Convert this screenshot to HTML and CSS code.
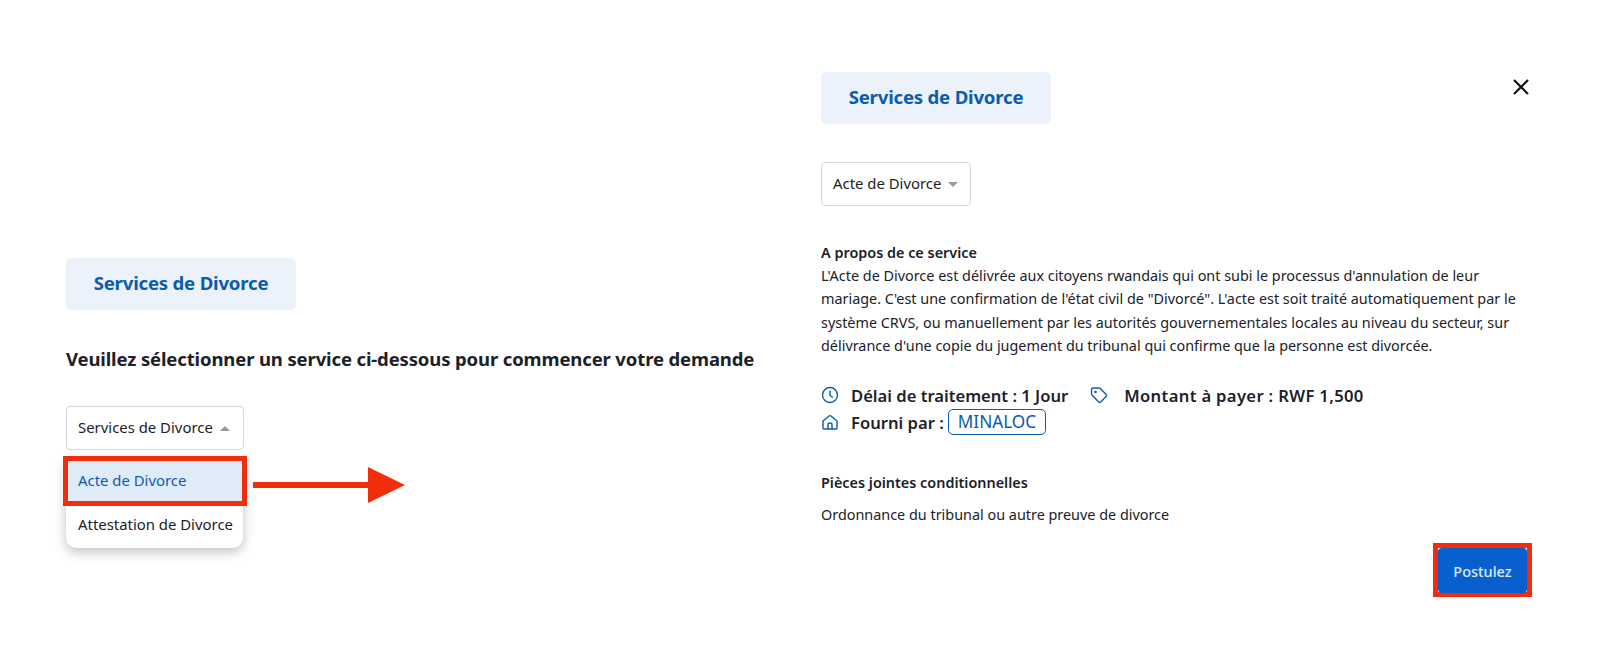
FILE: index.html
```html
<!DOCTYPE html>
<html lang="fr">
<head>
    <meta charset="UTF-8">
    <meta name="viewport" content="width=device-width, initial-scale=1.0">
    <title>Services de Divorce</title>
    <link rel="stylesheet" href="styles.css">
</head>
<body>
    <div class="left">
        <div class="pill">Services de Divorce</div>
        <h3 class="prompt">Veuillez sélectionner un service ci-dessous pour commencer votre demande</h3>
        <div class="select-wrap">
            <div class="select">Services de Divorce <span class="caret up"></span></div>
            <div class="menu">
                <div class="option active">Acte de Divorce</div>
                <div class="option">Attestation de Divorce</div>
            </div>
            <svg class="arrow" width="152" height="36" viewBox="0 0 152 36">
                <rect x="0" y="15" width="116" height="6" fill="#f12e0c"/>
                <polygon points="115,0 152,18 115,36" fill="#f12e0c"/>
            </svg>
        </div>
    </div>
    <div class="right">
        <button class="close" aria-label="Fermer">
            <svg width="20" height="20" viewBox="0 0 20 20"><path d="M3 3 L17 17 M17 3 L3 17" stroke="#111" stroke-width="2.2" fill="none"/></svg>
        </button>
        <div class="pill">Services de Divorce</div>
        <div class="select small">Acte de Divorce <span class="caret"></span></div>
        <div class="about">
            <strong>A propos de ce service</strong>
            <p>L'Acte de Divorce est délivrée aux citoyens rwandais qui ont subi le processus d'annulation de leur mariage. C'est une confirmation de l'état civil de "Divorcé". L'acte est soit traité automatiquement par le système CRVS, ou manuellement par les autorités gouvernementales locales au niveau du secteur, sur délivrance d'une copie du jugement du tribunal qui confirme que la personne est divorcée.</p>
        </div>
        <div class="meta">
            <div class="meta-row">
                <svg class="icon" viewBox="0 0 18 18"><circle cx="9" cy="9" r="7.5"/><path d="M9 4.5 V9.5 L12 11.5"/></svg>
                <span>Délai de traitement : 1 Jour</span>
                <svg class="icon tag" viewBox="0 0 18 18"><path d="M1.5 3.5 Q1.5 2 3 2 H9 Q9.8 2 10.3 2.5 L16.2 8.6 Q17 9.5 16.2 10.4 L10.6 16 Q9.6 16.8 8.7 16 L2.2 9.2 Q1.5 8.6 1.5 7.8 Z"/><circle cx="5.5" cy="6" r="0.6"/></svg>
                <span class="amount">Montant à payer : RWF 1,500</span>
            </div>
            <div class="meta-row">
                <svg class="icon" viewBox="0 0 18 18"><path d="M2 8 L8 3 Q9 2.2 10 3 L16 8 V15 Q16 16 15 16 H3 Q2 16 2 15 Z"/><path d="M7 16 V11.5 Q7 10 9 10 Q11 10 11 11.5 V16"/></svg>
                <span>Fourni par :</span>
                <span class="badge">MINALOC</span>
            </div>
        </div>
        <strong class="attach-title">Pièces jointes conditionnelles</strong>
        <p class="attach">Ordonnance du tribunal ou autre preuve de divorce</p>
        <div class="actions">
            <div class="apply-frame">
                <button class="apply">Postulez</button>
            </div>
        </div>
    </div>
</body>
</html>
```

FILE: styles.css
```css
* {
    box-sizing: border-box;
}
body {
    margin: 0;
    height: 661px;
    overflow: hidden;
    display: flex;
    background: white;
    color: #1c2128;
    font-family: "Noto Sans", Arial, sans-serif;
    font-size: 14.4px;
}
.left {
    width: 821px;
    padding: 258px 0 0 66px;
}
.right {
    position: relative;
    width: 779px;
    padding: 72px 68px 0 0;
}
.pill {
    width: 230px;
    height: 52px;
    display: flex;
    align-items: center;
    justify-content: center;
    padding-bottom: 4px;
    background: #ebf2fb;
    border-radius: 5px;
    color: #0b5cad;
    font-size: 18.6px;
    font-weight: 700;
    letter-spacing: -0.2px;
}
.prompt {
    margin: 36px 0 0;
    font-size: 18.5px;
    line-height: 26px;
    font-weight: 700;
    white-space: nowrap;
    letter-spacing: -0.13px;
}
.select-wrap {
    position: relative;
    width: 178px;
    margin-top: 34px;
}
.select {
    height: 44px;
    width: 178px;
    display: flex;
    align-items: center;
    gap: 7px;
    padding: 0 11px 2px;
    border: 1px solid #d3d5d8;
    border-radius: 4px;
    font-size: 14.9px;
    white-space: nowrap;
}
.select.small {
    width: 150px;
    margin-top: 38px;
}
.caret {
    width: 0;
    height: 0;
    border-left: 5px solid transparent;
    border-right: 5px solid transparent;
    border-top: 5px solid #999;
    margin-top: 2px;
}
.caret.up {
    border-top: none;
    border-bottom: 5px solid #999;
}
.menu {
    margin-top: 9px;
    width: 177px;
    height: 89px;
    background: white;
    border-radius: 0 0 10px 10px;
    box-shadow: 0 4px 12px rgba(0, 0, 0, 0.25);
}
.option {
    height: 44px;
    display: flex;
    align-items: center;
    padding: 0 12px 2px;
    font-size: 14.9px;
    white-space: nowrap;
}
.option.active {
    width: 178px;
    color: #0b5cad;
    background: #e0ebf8;
    outline: 5px solid #f12e0c;
    outline-offset: -2px;
}
.arrow {
    position: absolute;
    left: 187px;
    top: 61px;
}
.close {
    position: absolute;
    top: 77px;
    left: 690px;
    padding: 0;
    border: none;
    background: none;
}
.about {
    margin-top: 35px;
    line-height: 23.2px;
}
.about strong {
    font-weight: 600;
}
.about p {
    margin: 0;
}
.meta {
    display: flex;
    flex-direction: column;
    gap: 1px;
    margin-top: 25px;
    font-size: 16.6px;
    font-weight: 600;
}
.meta-row {
    display: flex;
    align-items: center;
    height: 26px;
}
.icon {
    width: 18px;
    height: 18px;
    margin-right: 12px;
    fill: none;
    stroke: #0b5cad;
    stroke-width: 1.4;
}
.icon.tag {
    margin-left: 22px;
    margin-right: 16px;
}
.amount {
    letter-spacing: 0.35px;
}
.badge {
    margin-left: 4px;
    padding: 0 9px;
    height: 26px;
    line-height: 24px;
    border: 1px solid #0b5cad;
    border-radius: 5px;
    color: #0b5cad;
    font-size: 17.2px;
    font-weight: 400;
}
.attach-title {
    display: block;
    margin-top: 38px;
    font-weight: 600;
}
.attach {
    margin: 13px 0 0;
}
.actions {
    display: flex;
    justify-content: flex-end;
    margin-top: 19px;
}
.apply-frame {
    width: 99px;
    height: 54px;
    border: 5px solid #f12e0c;
    background: white;
}
.apply {
    display: block;
    width: 100%;
    height: 45px;
    border: none;
    border-radius: 4px;
    background: #0a5fce;
    color: #d6ecff;
    font-family: inherit;
    font-size: 14.5px;
    font-weight: 500;
}
```
